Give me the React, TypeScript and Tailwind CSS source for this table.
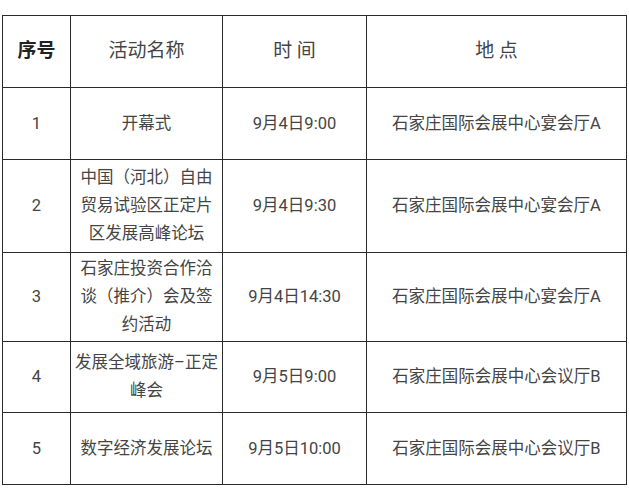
const ROWS = [
  { no: "1", name: ["开幕式"], time: "9月4日9:00", place: "石家庄国际会展中心宴会厅A", h: "h-[72px]" },
  { no: "2", name: ["中国（河北）自由", "贸易试验区正定片", "区发展高峰论坛"], time: "9月4日9:30", place: "石家庄国际会展中心宴会厅A", h: "h-[93px]" },
  { no: "3", name: ["石家庄投资合作洽", "谈（推介）会及签", "约活动"], time: "9月4日14:30", place: "石家庄国际会展中心宴会厅A", h: "h-[89px]" },
  { no: "4", name: ["发展全域旅游–正定", "峰会"], time: "9月5日9:00", place: "石家庄国际会展中心会议厅B", h: "h-[71px]" },
  { no: "5", name: ["数字经济发展论坛"], time: "9月5日10:00", place: "石家庄国际会展中心会议厅B", h: "h-[72px]" },
];

const cell = "border border-[#2a2a2a] text-center align-middle p-0";

export default function App() {
  return (
    <div className="h-[499px] w-[629px] bg-white pl-[2px] pt-[15px] font-['Roboto','Noto_Sans_CJK_SC',sans-serif] text-[#444]">
      <table className="w-[624px] table-fixed border-collapse">
        <colgroup>
          <col className="w-[68px]" />
          <col className="w-[152px]" />
          <col className="w-[144px]" />
          <col className="w-[260px]" />
        </colgroup>
        <thead>
          <tr className="h-[72px] text-[19px]">
            <th className={`${cell} font-bold text-[#222]`}>序号</th>
            <th className={`${cell} font-normal`}>活动名称</th>
            <th className={`${cell} font-normal`}>时&nbsp;间</th>
            <th className={`${cell} font-normal`}>地&nbsp;点</th>
          </tr>
        </thead>
        <tbody className="text-[16.5px] leading-[28px]">
          {ROWS.map((r) => (
            <tr key={r.no} className={r.h}>
              <td className={cell}>{r.no}</td>
              <td className={`${cell} whitespace-nowrap`}>
                {r.name.map((l) => (
                  <div key={l}>{l}</div>
                ))}
              </td>
              <td className={cell}>{r.time}</td>
              <td className={cell}>{r.place}</td>
            </tr>
          ))}
        </tbody>
      </table>
    </div>
  );
}
